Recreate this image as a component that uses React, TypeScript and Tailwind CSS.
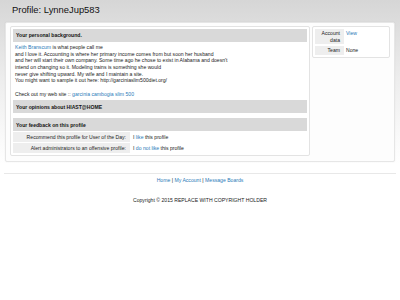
import React from "react";

const Bar = ({ children }: { children: React.ReactNode }) => (
  <div className="bg-[#d9d9d9] h-[13px] flex items-center pl-[3px] font-bold text-[5.1px] text-[#111]">
    {children}
  </div>
);

const A = ({ children }: { children: React.ReactNode }) => (
  <a href="#" className="text-[#2a7ab8]">
    {children}
  </a>
);

export default function App() {
  return (
    <div className="min-h-[300px] bg-white font-['Liberation_Sans',Arial,sans-serif] text-[#222] text-[5.12px] leading-[6.67px]">
      <div className="bg-gradient-to-b from-[#d6d6d6] via-[#eeeeee] to-white pt-[4px] pb-[2px]">
        <h1 className="pl-[12px] text-[9.4px] leading-[12px] text-[#111]">Profile: LynneJup583</h1>
        <div className="mx-[5px] mt-[6px] border border-[#e6e6e6] rounded-[2px] bg-[#fdfdfd] shadow-[0_0_2px_rgba(0,0,0,0.06)] flex justify-between px-[4px] pt-[3px] pb-[5px]">
          <div className="w-[300px] border border-[#e3e3e3] rounded-[2px] bg-white px-[2px] pt-[2px] pb-[2px]">
            <Bar>Your personal background.</Bar>
            <div className="pl-[2px] pt-[2px] pb-[3px]">
              <div>
                <A>Keith Branscum</A> is what people call me
              </div>
              <div>and I love it. Accounting is where her primary income comes from but soon her husband</div>
              <div>and her will start their own company. Some time ago he chose to exist in Alabama and doesn't</div>
              <div>intend on changing so it. Modeling trains is something she would</div>
              <div>never give shifting upward. My wife and I maintain a site.</div>
              <div>You might want to sample it out here: http://garciniaslim500diet.org/</div>
              <div className="h-[6.67px]" />
              <div>
                Check out my web site :: <A>garcinia cambogia slim 500</A>
              </div>
            </div>
            <Bar>Your opinions about HIAST@HOME</Bar>
            <div className="h-[5px]" />
            <Bar>Your feedback on this profile</Bar>
            <div className="flex flex-col gap-[1px] pt-[1px]">
              <div className="flex h-[10px] items-center">
                <div className="w-[117px] h-full bg-[#eeeeee] flex items-center justify-end pr-[4px]">
                  Recommend this profile for User of the Day:
                </div>
                <div className="pl-[3px]">
                  I <A>like</A> this profile
                </div>
              </div>
              <div className="flex h-[10px] items-center">
                <div className="w-[117px] h-full bg-[#eeeeee] flex items-center justify-end pr-[4px]">
                  Alert administrators to an offensive profile:
                </div>
                <div className="pl-[3px]">
                  I <A>do not like</A> this profile
                </div>
              </div>
            </div>
          </div>
          <div className="w-[78px] self-start border border-[#e3e3e3] rounded-[2px] bg-white p-[2px] flex flex-col gap-[2px]">
            <div className="flex">
              <div className="w-[29px] bg-[#eeeeee] text-right pr-[4px] py-[1px]">
                Account
                <br />
                data
              </div>
              <div className="pl-[2px] py-[1px]">
                <A>View</A>
              </div>
            </div>
            <div className="flex">
              <div className="w-[29px] bg-[#eeeeee] text-right pr-[4px] py-[1px]">Team</div>
              <div className="pl-[2px] py-[1px]">None</div>
            </div>
          </div>
        </div>
      </div>
      <div className="mx-[4px] mt-[9px] border-t border-[#e8e8e8] text-center pt-[3px]">
        <div>
          <A>Home</A> | <A>My Account</A> | <A>Message Boards</A>
        </div>
        <div className="mt-[13px]">Copyright © 2015 REPLACE WITH COPYRIGHT HOLDER</div>
      </div>
    </div>
  );
}
